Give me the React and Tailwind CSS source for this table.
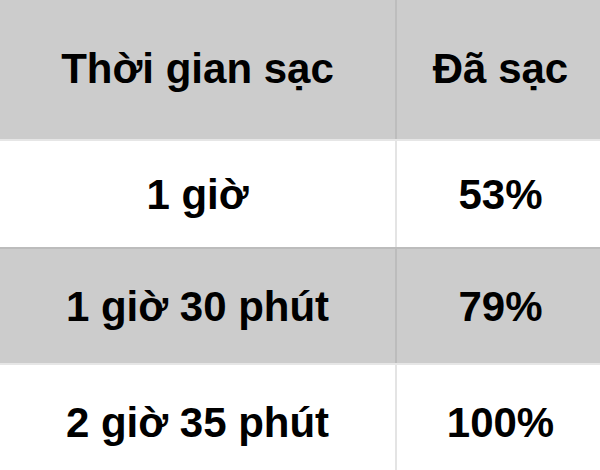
import React from "react";

const rows = [
    { time: "1 giờ", pct: "53%", gray: false },
    { time: "1 giờ 30 phút", pct: "79%", gray: true },
    { time: "2 giờ 35 phút", pct: "100%", gray: false },
];

function App() {
    return (
        <div className="w-[600px] h-[470px] overflow-hidden bg-white font-['Liberation_Sans',Arial,sans-serif] font-bold text-[42px] text-black">
            <div className="flex h-[139px] bg-[#cccccc]">
                <div className="w-[395px] flex items-center justify-center pb-[2px]">Thời gian sạc</div>
                <div className="w-[2px] bg-[#bdbdbd]"></div>
                <div className="flex-1 flex items-center justify-center pb-[2px] pl-[4px]">Đã sạc</div>
            </div>
            {rows.map((r) => (
                <div
                    key={r.time}
                    className={
                        r.gray
                            ? "flex h-[116px] bg-[#cccccc] border-t-2 border-[#bcbcbc]"
                            : "flex " + (r.time === "1 giờ" ? "h-[108px]" : "h-[117px]") + " bg-white border-t-2 border-[#e6e6e6]"
                    }
                >
                    <div className="w-[395px] flex items-center justify-center">{r.time}</div>
                    <div className={r.gray ? "w-[2px] bg-[#bcbcbc]" : "w-[2px] bg-[#e4e4e4]"}></div>
                    <div className="flex-1 flex items-center justify-center pl-[4px]">{r.pct}</div>
                </div>
            ))}
        </div>
    );
}

export default App;
